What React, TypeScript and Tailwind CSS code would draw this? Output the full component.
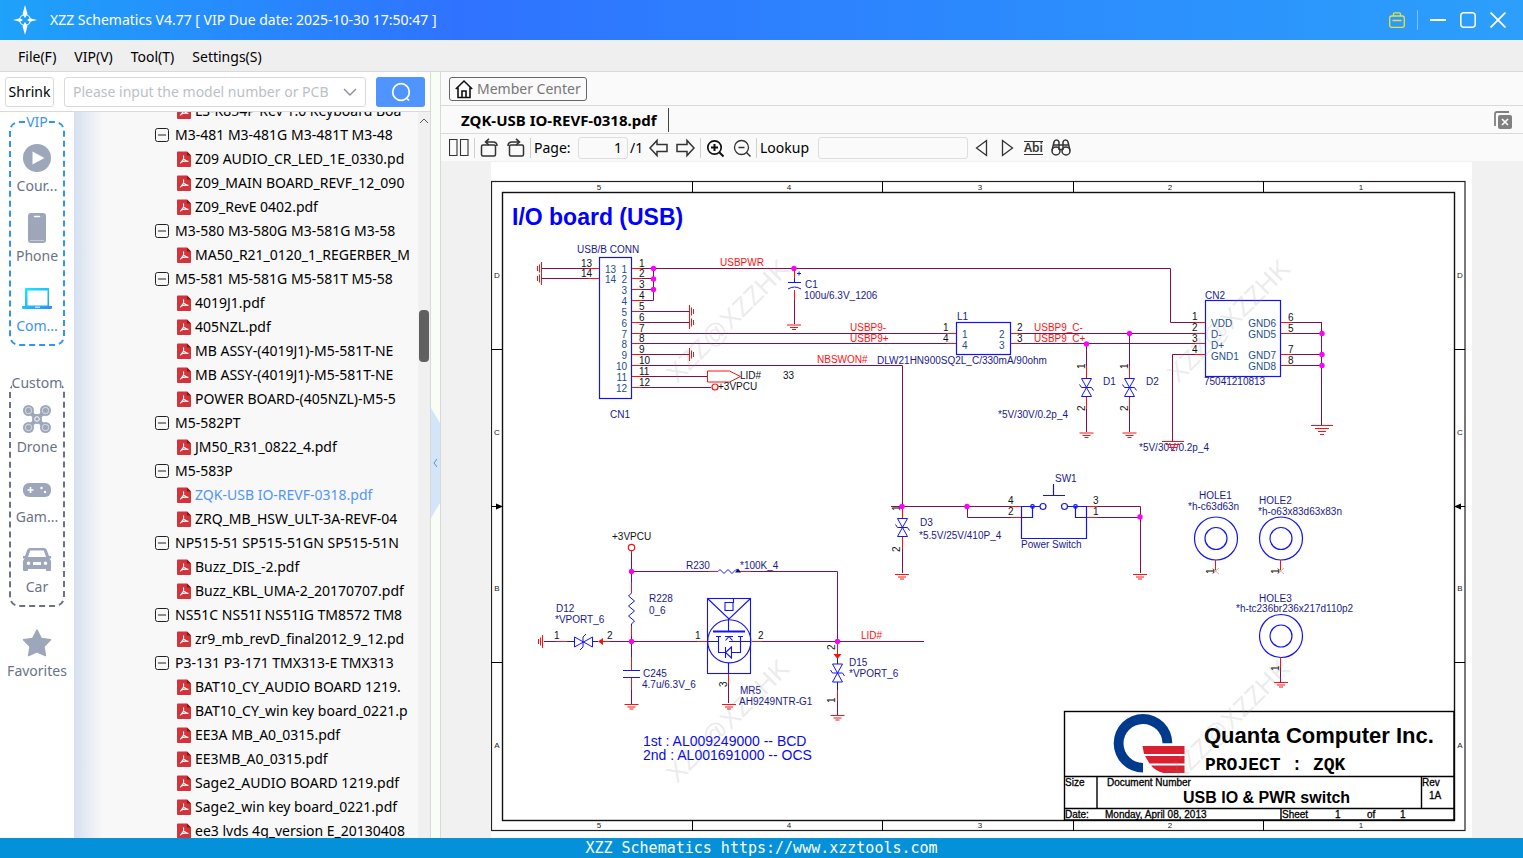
import React from "react";

type Row = { kind: "group" | "file"; name: string; active?: boolean };

const g = (name: string): Row => ({ kind: "group", name });
const f = (name: string, active = false): Row => ({ kind: "file", name, active });

const rows: Row[] = [
  f("LS-K854P Rev 1.0 Keyboard Boa"),
  g("M3-481 M3-481G M3-481T M3-48"),
  f("Z09 AUDIO_CR_LED_1E_0330.pd"),
  f("Z09_MAIN BOARD_REVF_12_090"),
  f("Z09_RevE 0402.pdf"),
  g("M3-580 M3-580G M3-581G M3-58"),
  f("MA50_R21_0120_1_REGERBER_M"),
  g("M5-581 M5-581G M5-581T M5-58"),
  f("4019J1.pdf"),
  f("405NZL.pdf"),
  f("MB ASSY-(4019J1)-M5-581T-NE"),
  f("MB ASSY-(4019J1)-M5-581T-NE"),
  f("POWER BOARD-(405NZL)-M5-5"),
  g("M5-582PT"),
  f("JM50_R31_0822_4.pdf"),
  g("M5-583P"),
  f("ZQK-USB IO-REVF-0318.pdf", true),
  f("ZRQ_MB_HSW_ULT-3A-REVF-04"),
  g("NP515-51 SP515-51GN SP515-51N"),
  f("Buzz_DIS_-2.pdf"),
  f("Buzz_KBL_UMA-2_20170707.pdf"),
  g("NS51C NS51I NS51IG TM8572 TM8"),
  f("zr9_mb_revD_final2012_9_12.pd"),
  g("P3-131 P3-171 TMX313-E TMX313"),
  f("BAT10_CY_AUDIO BOARD 1219."),
  f("BAT10_CY_win key board_0221.p"),
  f("EE3A MB_A0_0315.pdf"),
  f("EE3MB_A0_0315.pdf"),
  f("Sage2_AUDIO BOARD 1219.pdf"),
  f("Sage2_win key board_0221.pdf"),
  f("ee3 lvds 4g_version E_20130408"),
];

/* ---------- icons ---------- */

const PdfIcon = () => (
  <svg className="h-4 w-3.5 shrink-0" viewBox="0 0 14 16">
    <path d="M1 0.5h9l4 4V15a1 1 0 0 1-1 1H1a1 1 0 0 1-1-1V1.500a1 1 0 0 1 1-1z" fill="#d2343c" />
    <path d="M10 0.500l4 4h-4z" fill="#8e1219" />
    <path d="M6.600 4.800v3.400L3.500 12M6.600 8.200l4.400 2.300M4.500 11c1.500-.9 3.600-1.200 6.500-.6" fill="none" stroke="#fff" strokeWidth="1.100" strokeLinecap="round" />
  </svg>
);

const CollapseIcon = () => (
  <svg className="h-3.5 w-3.5 shrink-0" viewBox="0 0 14 14" fill="none" stroke="#222">
    <rect x="0.5" y="0.5" width="13" height="13" rx="2" />
    <path d="M3 7h8" />
  </svg>
);

const PlayIcon = () => (
  <svg className="h-8 w-8" viewBox="0 0 32 32">
    <circle cx="16" cy="16" r="14" fill="#9ea6ba" />
    <path d="M11.500 9.500v13L23.500 16z" fill="#fff" />
  </svg>
);

const PhoneIcon = () => (
  <svg className="h-8 w-8" viewBox="0 0 32 32">
    <rect x="7" y="1" width="18" height="30" rx="3" fill="#9ea6ba" />
    <path d="M13.500 4.500h5" stroke="#fff" strokeWidth="1.500" strokeLinecap="round" />
    <path d="M9 28.500h14" stroke="#c5cad6" />
  </svg>
);

const LaptopIcon = () => (
  <svg className="h-8 w-8" viewBox="0 0 32 32">
    <defs>
      <linearGradient id="lap" x1="0" x2="1" y1="0" y2="1">
        <stop offset="0" stopColor="#12f0ff" />
        <stop offset="1" stopColor="#2b8bff" />
      </linearGradient>
    </defs>
    <path fillRule="evenodd" fill="url(#lap)" d="M5 6h23v18H31v1.500a1.500 1.500 0 0 1-1.500 1.500h-27A1.500 1.500 0 0 1 1 25.500V24h3V7a1 1 0 0 1 1-1zM6.500 8.500V23.500h20V8.500z" />
    <path d="M14 25.200h5" stroke="#fff" />
  </svg>
);

const DroneIcon = () => (
  <svg className="h-8 w-8" viewBox="0 0 32 32">
    <path d="M7 7l18 18M25 7L7 25" stroke="#9ea6ba" strokeWidth="4" />
    {[[7.5, 7.5], [24.5, 7.5], [7.5, 24.5], [24.5, 24.5]].map(([x, y]) => (
      <g key={`${x}-${y}`}>
        <circle cx={x} cy={y} r="5.500" fill="#9ea6ba" />
        <circle cx={x} cy={y} r="3.200" fill="none" stroke="#dfe2ea" strokeWidth="0.900" />
      </g>
    ))}
    <circle cx="16" cy="16" r="5" fill="#9ea6ba" />
    <circle cx="16" cy="16" r="2.300" fill="none" stroke="#fff" strokeWidth="1" />
  </svg>
);

const GameIcon = () => (
  <svg className="h-8 w-8" viewBox="0 0 32 32">
    <rect x="2" y="10" width="28" height="14" rx="6" fill="#9ea6ba" />
    <path d="M6.500 17h6M9.500 14v6" stroke="#fff" strokeWidth="1.600" />
    <circle cx="20.500" cy="15" r="1.200" fill="#fff" />
    <circle cx="24" cy="19" r="1.200" fill="#fff" />
  </svg>
);

const CarIcon = () => (
  <svg className="h-8 w-8" viewBox="0 0 32 32">
    <path fillRule="evenodd" fill="#9ea6ba" d="M9 5h14a3 3 0 0 1 2.700 1.800L28 13h2v2.500h-1.500L30 18v9a1 1 0 0 1-1 1h-3a1 1 0 0 1-1-1v-1H7v1a1 1 0 0 1-1 1H3a1 1 0 0 1-1-1v-9l1.500-2.500H2V13h2l2.300-6.200A3 3 0 0 1 9 5zm.2 2.500L7 14h18l-2.200-6.500zM7.500 18.500a1.800 1.800 0 1 0 0 3.600 1.800 1.800 0 0 0 0-3.600zm17 0a1.800 1.800 0 1 0 0 3.600 1.800 1.800 0 0 0 0-3.600zM12 19v3h8v-3z" />
  </svg>
);

const StarIcon = () => (
  <svg className="h-8 w-8" viewBox="0 0 32 32">
    <path d="M16 3l4.200 8.400 9.300 1.400-6.600 6.600 1.500 9.200L16 24.800l-8.400 3.800 1.500-9.200-6.600-6.600 9.300-1.400z" fill="#9ea6ba" stroke="#9ea6ba" strokeWidth="1.500" strokeLinejoin="round" />
  </svg>
);

const LogoIcon = () => (
  <svg className="h-8 w-8" viewBox="0 0 32 32" fill="#fff">
    <circle cx="16" cy="16" r="5.500" fill="none" stroke="#fff" strokeDasharray="6 2.640" strokeDashoffset="-1.300" />
    <path d="M16 1l2.500 9-2.500 4-2.500-4zM16 31l2.500-9-2.500-4-2.500 4z" />
    <path d="M4 16l7-1.800 3 1.800-3 1.800zM28 16l-7-1.800-3 1.800 3 1.800z" />
  </svg>
);

/* ---------- sidebar ---------- */

const NavItem = ({ icon, label, active }: { icon: React.ReactNode; label: string; active?: boolean }) => (
  <button className={active ? "flex h-[70px] w-full flex-col items-center text-[#3b93f5]" : "flex h-[70px] w-full flex-col items-center text-[#6b7285]"}>
    {icon}
    <span className="leading-6">{label}</span>
  </button>
);

const Sidebar = () => (
  <nav className="flex w-[74px] shrink-0 flex-col items-center bg-white pt-[9px] text-sm">
    <section className="relative h-[225px] w-14 rounded-[10px] border-2 border-dashed border-[#2f95f3] pt-[19px]">
      <h2 className="absolute inset-x-0 -top-[13px] text-center leading-6 text-[#3b93f5]">
        <span className="bg-white">VIP</span>
      </h2>
      <NavItem icon={<PlayIcon />} label="Cour..." />
      <NavItem icon={<PhoneIcon />} label="Phone" />
      <NavItem icon={<LaptopIcon />} label="Com..." active />
    </section>
    <section className="relative mt-9 h-[225px] w-14 rounded-[10px] border-2 border-dashed border-[#6b7285] pt-[19px]">
      <h2 className="absolute inset-x-0 -top-[13px] flex justify-center leading-6 text-[#6b7285]">
        <span className="bg-white">Custom</span>
      </h2>
      <NavItem icon={<DroneIcon />} label="Drone" />
      <NavItem icon={<GameIcon />} label="Gam..." />
      <NavItem icon={<CarIcon />} label="Car" />
    </section>
    <div className="mt-5 w-full">
      <NavItem icon={<StarIcon />} label="Favorites" />
    </div>
  </nav>
);

/* ---------- schematic primitives ---------- */

const WIRE = "#80104c";
const RED = "#ff1010";
const BLUE = "#1414f0";
const NAVY = "#1a1a8c";
const PIN = "#1c4f8b";

const W = ({ d }: { d: string }) => <path d={d} fill="none" stroke={WIRE} />;
const R = ({ d }: { d: string }) => <path d={d} fill="none" stroke={RED} />;
const B = ({ d }: { d: string }) => <path d={d} fill="none" stroke={BLUE} />;
const Dot = ({ x, y }: { x: number; y: number }) => <circle cx={x} cy={y} r="2.700" fill="#ff00ff" />;

type TProps = { x: number; y: number; c?: string; s?: number; a?: "start" | "middle" | "end"; b?: boolean; children: React.ReactNode };
const T = ({ x, y, c = NAVY, s = 10, a = "start", b, children }: TProps) => (
  <text x={x} y={y} fill={c} fontSize={s} textAnchor={a} fontWeight={b ? 700 : 400}>{children}</text>
);
const V = ({ x, y, children }: { x: number; y: number; children: React.ReactNode }) => (
  <text transform={`translate(${x} ${y}) rotate(-90)`} fill="#111" fontSize={10}>{children}</text>
);

const Gnd = ({ x, y }: { x: number; y: number }) => (
  <R d={`M${x - 7} ${y}h14M${x - 4} ${y + 2.500}h8M${x - 2} ${y + 4.500}h4`} />
);
const WideGnd = ({ x, y }: { x: number; y: number }) => (
  <R d={`M${x - 11} ${y}h22M${x - 7} ${y + 3}h14M${x - 4} ${y + 6}h8M${x - 2} ${y + 9}h4`} />
);
const SideGnd = ({ x, y, dir }: { x: number; y: number; dir: 1 | -1 }) => (
  <R d={`M${x} ${y - 6.500}v13M${x + 2 * dir} ${y - 4}v8M${x + 4 * dir} ${y - 2.500}v5`} />
);
const Tvs = ({ x, y }: { x: number; y: number }) => (
  <B d={`M${x - 5} ${y - 9}h10l-10 18h10zM${x - 7} ${y - 3}l2 3h10l2 3`} />
);
const Hole = ({ x, y }: { x: number; y: number }) => (
  <g fill="none" stroke={BLUE} strokeWidth="1.200">
    <circle cx={x} cy={y} r="21.500" />
    <circle cx={x} cy={y} r="11" />
  </g>
);
const Watermark = ({ x, y }: { x: number; y: number }) => (
  <text transform={`translate(${x} ${y}) rotate(-45)`} fontSize={26} fill="#888" fillOpacity="0.180">XZZ@XZZHK</text>
);

const pinY = [268.5, 278.5, 289.5, 300.5, 311.5, 322.5, 333.5, 343.5, 354.5, 365.5, 376.5, 387.5];
const colLabels: [string, number][] = [["5", 599], ["4", 789], ["3", 980], ["2", 1170], ["1", 1361]];
const rowLabels: [string, number][] = [["D", 275], ["C", 432], ["B", 588], ["A", 745]];

const Frame = () => (
  <g>
    <g fill="none" stroke="#222">
      <rect x="491.500" y="181.500" width="973.500" height="649" strokeWidth="1.200" />
      <rect x="502.500" y="192.500" width="952" height="628" stroke="#111" strokeWidth="1.400" />
      <path d="M692.500 181v11M882.500 181v11M1073.500 181v11M1263.500 181v11M692.500 820v11M882.500 820v11M1073.500 820v11M1263.500 820v11M491 349.500h11M491 662.500h11M1454 349.500h11M1454 662.500h11M491 506.500h6M1460 506.500h5" stroke="#000" />
    </g>
    <path d="M496 503.500l7 3-7 3zM1461 503.500l-7 3 7 3z" />
    {colLabels.map(([t, x]) => (
      <g key={t}>
        <T x={x} y={190} c="#222" s={8} a="middle">{t}</T>
        <T x={x} y={828} c="#222" s={8} a="middle">{t}</T>
      </g>
    ))}
    {rowLabels.map(([t, y]) => (
      <g key={t}>
        <T x={497} y={y + 3} c="#222" s={8} a="middle">{t}</T>
        <T x={1460} y={y + 3} c="#222" s={8} a="middle">{t}</T>
      </g>
    ))}
  </g>
);

const Connector1 = () => (
  <g>
    <T x={577} y={253}>USB/B CONN</T>
    <rect x="599.500" y="257.500" width="32" height="141" fill="none" stroke={BLUE} strokeWidth="1.200" />
    {pinY.map((y, i) => (
      <g key={y}>
        <R d={`M632 ${y}h10`} />
        <T x={639} y={y - 2} c="#111">{i + 1}</T>
        <T x={627} y={y + 4} c={PIN} a="end">{i + 1}</T>
      </g>
    ))}
    {[268.5, 278.5].map((y, i) => (
      <g key={y}>
        <W d={`M542 ${y}h46`} />
        <R d={`M588 ${y}h11`} />
        <SideGnd x={541.5} y={y} dir={-1} />
        <T x={581} y={y - 2} c="#111">{13 + i}</T>
        <T x={605} y={y + 4} c={PIN}>{13 + i}</T>
      </g>
    ))}
    <W d="M642 268.500H1170.500V322.500H1195M642 278.500h11M642 289.500h11M642 300.500h11.500V268" />
    <Dot x={653.5} y={268.5} />
    <Dot x={653.5} y={279} />
    <Dot x={653.5} y={289.5} />
    {[311.5, 322.5, 354.5].map((y) => (
      <g key={y}>
        <W d={`M642 ${y}h47`} />
        <SideGnd x={689.5} y={y} dir={1} />
      </g>
    ))}
    <W d="M642 333.500H946M642 343.500H946M642 365.500H902.500V506M642 376.500h65M642 387.500h69" />
    <R d="M707.500 371h22l11 5.500-11 5.500h-22z" />
    <circle cx="715" cy="387" r="3" fill="none" stroke={RED} strokeWidth="1.200" />
    <T x={740} y={379} c="#111">LID#</T>
    <T x={783} y={379} c="#111">33</T>
    <T x={718} y={390} c="#111">+3VPCU</T>
    <T x={610} y={418}>CN1</T>
    <T x={720} y={266} c={RED}>USBPWR</T>
    <T x={850} y={331} c={RED}>USBP9-</T>
    <T x={850} y={342} c={RED}>USBP9+</T>
    <T x={817} y={363} c={RED}>NBSWON#</T>
  </g>
);

const Capacitor1 = () => (
  <g>
    <Dot x={794} y={268.5} />
    <R d="M794.500 269v13M794.500 290v10" />
    <B d="M794.500 278v4.500M788 282.500h13M788 289q6.500-4 13 0M797 273.500h4M799 271.500v4" />
    <W d="M794.500 300v24" />
    <Gnd x={794} y={325} />
    <T x={805} y={288}>C1</T>
    <T x={804} y={299}>100u/6.3V_1206</T>
  </g>
);

const UsbSection = () => (
  <g>
    <rect x="956.500" y="322.500" width="54" height="32" fill="none" stroke={BLUE} strokeWidth="1.200" />
    <T x={957} y={320}>L1</T>
    <T x={962} y={364} a="middle">DLW21HN900SQ2L_C/330mA/90ohm</T>
    <R d="M946 333.500h10M946 343.500h10M1011 333.500h10M1011 343.500h10M1195 322.500h10M1195 333.500h10M1195 343.500h10M1195 354.500h10" />
    <W d="M1021 333.500H1195M1021 343.500H1195M1195 354.500H1172.500V441" />
    <T x={943} y={331} c="#111">1</T>
    <T x={943} y={342} c="#111">4</T>
    <T x={962} y={338} c={PIN}>1</T>
    <T x={962} y={349} c={PIN}>4</T>
    <T x={999} y={338} c={PIN}>2</T>
    <T x={999} y={349} c={PIN}>3</T>
    <T x={1017} y={331} c="#111">2</T>
    <T x={1017} y={342} c="#111">3</T>
    <T x={1034} y={331} c={RED}>USBP9_C-</T>
    <T x={1034} y={342} c={RED}>USBP9_C+</T>
    {[1086.5, 1129.5].map((x, i) => (
      <g key={x}>
        <W d={`M${x} ${i ? 333 : 343}V366M${x} 409V432`} />
        <R d={`M${x} 366v12M${x} 397v12`} />
        <Tvs x={x} y={387.5} />
        <Gnd x={x} y={433} />
        <Dot x={x} y={i ? 333.5 : 344} />
        <V x={x - 2} y={369}>1</V>
        <V x={x - 2} y={411}>2</V>
      </g>
    ))}
    <T x={1103} y={385}>D1</T>
    <T x={1146} y={385}>D2</T>
    <T x={998} y={418}>*5V/30V/0.2p_4</T>
    <T x={1139} y={451}>*5V/30V/0.2p_4</T>
    <WideGnd x={1173} y={441.5} />
    <rect x="1205.500" y="300.500" width="75" height="76" fill="none" stroke={BLUE} strokeWidth="1.200" />
    <T x={1205} y={299}>CN2</T>
    <T x={1204} y={385}>75041210813</T>
    {["VDD", "D-", "D+", "GND1"].map((t, i) => (
      <g key={t}>
        <T x={1211} y={327 + i * 11} c={PIN}>{t}</T>
        <T x={1192} y={320 + i * 11} c="#111">{i + 1}</T>
      </g>
    ))}
    {([["GND6", 6, 322.5], ["GND5", 5, 333.5], ["GND7", 7, 354.5], ["GND8", 8, 365.5]] as [string, number, number][]).map(([t, n, y]) => (
      <g key={t}>
        <T x={1276} y={y + 4} c={PIN} a="end">{t}</T>
        <T x={1288} y={y - 2} c="#111">{n}</T>
        <R d={`M1281 ${y}h11`} />
        <W d={`M1292 ${y}h30`} />
      </g>
    ))}
    <W d="M1321.500 322V425" />
    <Dot x={1322} y={333.5} />
    <Dot x={1322} y={354.5} />
    <Dot x={1322} y={365.5} />
    <WideGnd x={1322} y={425.5} />
  </g>
);

const SwitchSection = () => (
  <g>
    <W d="M891 506.500H1011M967.500 506V517.500H1011M902.500 549V573M1097 506.500H1140.500V573M1097 517.500H1140" />
    <R d="M902.500 507v12M902.500 537v12M1011 506.500h10M1011 517.500h10M1087 506.500h10M1087 517.500h10" />
    <Tvs x={902.5} y={527.5} />
    <Gnd x={902} y={574.5} />
    <Gnd x={1140} y={574.5} />
    <V x={900} y={511}>1</V>
    <V x={900} y={552}>2</V>
    <T x={920} y={526}>D3</T>
    <T x={919} y={539}>*5.5V/25V/410P_4</T>
    <g fill="none" stroke={BLUE} strokeWidth="1.200">
      <path d="M1032 506.500h-10.500V538.500h65V506.500h-10.500M1032.500 506V517.500h-11M1075.500 506V517.500h11M1032 506.500h8M1068 506.500h8M1053.500 484V495.500M1043 495.500h22" />
      <circle cx="1032.500" cy="506.500" r="1.800" />
      <circle cx="1043" cy="506.500" r="3" />
      <circle cx="1064.500" cy="506.500" r="3" />
      <circle cx="1075.500" cy="506.500" r="1.800" />
    </g>
    <T x={1055} y={482}>SW1</T>
    <T x={1021} y={548}>Power Switch</T>
    <T x={1008} y={504} c="#111">4</T>
    <T x={1008} y={515} c="#111">2</T>
    <T x={1093} y={504} c="#111">3</T>
    <T x={1093} y={515} c="#111">1</T>
    <Dot x={902} y={506.500} />
    <Dot x={967} y={506.500} />
    <Dot x={1140} y={517} />
    <T x={1199} y={499}>HOLE1</T>
    <T x={1188} y={510}>*h-c63d63n</T>
    <T x={1259} y={504}>HOLE2</T>
    <T x={1258} y={515}>*h-o63x83d63x83n</T>
    <T x={1259} y={602}>HOLE3</T>
    <T x={1236} y={612}>*h-tc236br236x217d110p2</T>
    <Hole x={1216} y={538.5} />
    <Hole x={1281} y={538.5} />
    <Hole x={1281} y={636} />
    <R d="M1215.500 560v10M1280.500 560v10M1280.500 657v11" />
    <path d="M1212 568l7 6M1219 568l-7 6M1277 568l7 6M1284 568l-7 6" stroke="#c8906a" strokeWidth="0.700" />
    <W d="M1280.500 668v14" />
    <Gnd x={1281} y={682.5} />
    <V x={1214} y={574}>1</V>
    <V x={1279} y={574}>1</V>
    <V x={1279} y={671}>1</V>
  </g>
);

const SensorSection = () => (
  <g>
    <T x={612} y={540} c="#111">+3VPCU</T>
    <circle cx="631.500" cy="547.500" r="3.200" fill="none" stroke={RED} strokeWidth="1.200" />
    <W d="M631.500 553V582M631.500 571.500H708M751 571.500H837.500V641M631.500 636V657M544 641.500h12M610 641.500h87M762 641.500H924M631.500 690v14M728.500 684v19M837.500 701v14" />
    <R d="M631.500 551v2M631.500 582v11M631.500 625v11M708 571.500h10M740 571.500h11M556 641.500h11M603 641.500h7M697 641.500h11M752 641.500h10M631.500 657v13M631.500 678v12M728.500 673v11M837.500 642v12M837.500 690v11" />
    <B d="M718 571.500l2-2 4 4 4-4 4 4 4-4 4 2M631.500 593l-3 3 6 5-6 5 6 5-6 5 6 5-3 3v2M567 641.500h7M592 641.500h6M623 670.500h17M623 677.500h17M837.500 658v6M837.500 682v8M574.500 637v10l18-10v10zM586 634l-3 3v10l-3 3" />
    <path d="M735 572.500l3-4 3 4z" fill="#101070" />
    <path d="M598 641.500l5-3.500v7zM833.500 654h8l-4 5z" fill={RED} />
    <SideGnd x={542.5} y={641.5} dir={-1} />
    <Gnd x={631.5} y={704.5} />
    <Gnd x={729} y={704.5} />
    <Gnd x={837.5} y={715.5} />
    <Tvs x={837.5} y={673} />
    <g fill="none" stroke={BLUE} strokeWidth="1.100">
      <rect x="707.500" y="598.500" width="43" height="75" />
      <circle cx="729.300" cy="641.300" r="21.600" />
      <path d="M707.500 598.500l21.500 20.500 21.500-20.500M725 602.500h8v8h-8zM733.500 598v5M728.500 619v12M728.500 663v10M708 641.500h10.500M718.500 636v16.500h7M732 652.500h8.500V636M729 641.500h22M716 636.500h5M725 636.500h8M738 636.500h5M725.500 640.500l3.500-4 3.500 4M725.500 647v11M731.500 647l-6 5.500 6 5.500z" />
      <path d="M713 631.500h32" strokeWidth="2" />
    </g>
    <Dot x={631.500} y={571.500} />
    <Dot x={631.500} y={641.500} />
    <Dot x={837.500} y={641.500} />
    <T x={686} y={569}>R230</T>
    <T x={740} y={569}>*100K_4</T>
    <T x={649} y={602}>R228</T>
    <T x={649} y={614}>0_6</T>
    <T x={556} y={612}>D12</T>
    <T x={555} y={623}>*VPORT_6</T>
    <T x={554} y={639} c="#111">1</T>
    <T x={607} y={639} c="#111">2</T>
    <T x={695} y={639} c="#111">1</T>
    <T x={758} y={639} c="#111">2</T>
    <T x={643} y={677}>C245</T>
    <T x={642} y={688}>4.7u/6.3V_6</T>
    <T x={740} y={694}>MR5</T>
    <T x={739} y={705}>AH9249NTR-G1</T>
    <T x={861} y={639} c={RED}>LID#</T>
    <T x={849} y={666}>D15</T>
    <T x={849} y={677}>*VPORT_6</T>
    <V x={727} y={687}>3</V>
    <V x={835} y={650}>2</V>
    <V x={835} y={703}>1</V>
    <T x={643} y={746} s={14} c="#0a0af0">1st : AL009249000 -- BCD</T>
    <T x={643} y={760} s={14} c="#0a0af0">2nd : AL001691000 -- OCS</T>
  </g>
);

const TitleBlock = () => (
  <g>
    <g fill="none" stroke="#000" strokeWidth="1.400">
      <rect x="1064.500" y="711.500" width="389.500" height="108.500" />
      <path d="M1064 776.500h390M1064 808.500h390M1097 776v32M1421.500 776v32M1281 808v12" />
    </g>
    <path d="M1143 772.600A29.300 29.300 0 1 1 1172.300 743.300H1162.500A19.500 19.500 0 1 0 1143 763z" fill="#003a8c" />
    <path d="M1142.500 746h42v8h-40.500zM1145 756h39.500v7.500h-35zM1151 765.500h33.500v7.500h-21q-8-2-12.500-7.500z" fill="#da1f30" />
    <T x={1204} y={743} s={22} c="#000" b>Quanta Computer Inc.</T>
    <text x="1205" y="770" fontSize={18} fontWeight={700} fontFamily="'Liberation Mono', monospace">PROJECT : ZQK</text>
    <T x={1183} y={803} s={16} c="#000" b>USB IO &amp; PWR switch</T>
    <g stroke="#000" strokeWidth="0.300">
      <T x={1065} y={786} c="#000">Size</T>
      <T x={1107} y={786} c="#000">Document Number</T>
      <T x={1422} y={786} c="#000">Rev</T>
      <T x={1429} y={799} c="#000">1A</T>
      <T x={1065} y={818} c="#000">Date:</T>
      <T x={1105} y={818} c="#000">Monday, April 08, 2013</T>
      <T x={1282} y={818} c="#000">Sheet</T>
      <T x={1335} y={818} c="#000">1</T>
      <T x={1367} y={818} c="#000">of</T>
      <T x={1400} y={818} c="#000">1</T>
    </g>
  </g>
);

const Schematic = () => (
  <svg className="h-full w-full bg-white" viewBox="491 162 981 676" preserveAspectRatio="xMinYMin meet" fontFamily="'Liberation Sans', Arial, sans-serif" role="img" aria-label="I/O board (USB)">
    <Frame />
    <T x={512} y={225} s={23} c="#0000ff" b>I/O board (USB)</T>
    <Connector1 />
    <Capacitor1 />
    <UsbSection />
    <SwitchSection />
    <SensorSection />
    <TitleBlock />
    <Watermark x={677} y={384} />
    <Watermark x={1178} y={384} />
    <Watermark x={677} y={784} />
    <Watermark x={1178} y={784} />
  </svg>
);

/* ---------- toolbar ---------- */

const Tool = ({ label, children }: { label: string; children: React.ReactNode }) => (
  <button aria-label={label} className="flex h-5 w-5 shrink-0 items-center justify-center">
    <svg className="h-5 w-5" viewBox="0 0 20 20" fill="none" stroke="#333" strokeWidth="1.500">{children}</svg>
  </button>
);
const Sep = () => <span className="h-5 w-px shrink-0 bg-[#cfcfcf]" />;

const Toolbar = () => (
  <div className="flex h-[27px] shrink-0 items-center bg-[#fafafa] pl-2 text-sm">
    <Tool label="Two pages"><path d="M.500 1.500h7.500v16H.500zM11.500 1.500H19v16h-7.500z" strokeWidth="1.100" /></Tool>
    <span className="w-[5px]" /><Sep /><span className="w-1" />
    <Tool label="Rotate left"><rect x="2.500" y="7" width="14" height="11" rx="1.500" /><path d="M7 4h7q4 0 4 4M10 .800L6.500 4 10 7" strokeWidth="1.600" /></Tool>
    <span className="w-[7px]" />
    <Tool label="Rotate right"><rect x="3.500" y="7" width="14" height="11" rx="1.500" /><path d="M13 4H6Q2 4 2 8M10 .800L13.500 4 10 7" strokeWidth="1.600" /></Tool>
    <span className="w-1" /><Sep />
    <label htmlFor="page" className="ml-[3px] w-11 shrink-0">Page:</label>
    <input id="page" defaultValue="1" className="h-[22px] w-[50px] shrink-0 rounded-[3px] border border-[#dedede] bg-[#fafafa] pr-[5px] text-right" />
    <span className="ml-0.5 w-[19px] shrink-0">/1</span>
    <Tool label="Previous page"><path d="M1 10l7-7.500v4h10v7H8v4z" /></Tool>
    <span className="w-1.5" />
    <Tool label="Next page"><path d="M19 10l-7-7.500v4H2v7h10v4z" /></Tool>
    <span className="w-[5px]" /><Sep /><span className="w-[5px]" />
    <Tool label="Zoom in"><circle cx="8.500" cy="9.500" r="6.700" stroke="#111" strokeWidth="1.700" /><path d="M13.500 14.500l4 4M8.500 6v7M5 9.500h7" stroke="#111" strokeWidth="2" /></Tool>
    <span className="w-[7px]" />
    <Tool label="Zoom out"><circle cx="8.500" cy="9.500" r="7" strokeWidth="1.300" /><path d="M13.500 14.500l4 4M5.500 9.500h6" /></Tool>
    <span className="w-[3px]" /><Sep />
    <label htmlFor="lookup" className="ml-[3px] w-[58px] shrink-0">Lookup</label>
    <input id="lookup" className="h-[22px] w-[150px] shrink-0 rounded-[3px] border border-[#dedede] bg-[#fafafa] px-1" />
    <span className="w-1" />
    <Tool label="Find previous"><path d="M14.500 2.500v15l-10-7.500z" strokeWidth="1.300" /></Tool>
    <span className="w-1.5" />
    <Tool label="Find next"><path d="M4.500 2.500v15l10-7.500z" strokeWidth="1.300" /></Tool>
    <button className="ml-1.5 shrink-0 border-y border-[#333] text-center text-xs leading-3 font-semibold text-[#333]">Abi</button>
    <span className="w-2" />
    <Tool label="Search document">
      <circle cx="5" cy="13" r="4" /><circle cx="15" cy="13" r="4" />
      <path d="M1 12.500L3 4q.500-2 2.500-2T8 4v8M19 12.500L17 4q-.500-2-2.500-2T12 4v8M8 7h4M8 11.500h4M2.500 7h5M12.500 7h5" />
    </Tool>
  </div>
);

/* ---------- page ---------- */

export default function App() {
  return (
    <div className="flex h-screen flex-col overflow-hidden bg-[#f0f0f0] font-['Noto_Sans','Open_Sans',sans-serif] text-sm text-black">
      <header className="flex h-10 shrink-0 items-center bg-linear-to-r from-[#1ea2fa] via-[#2f72ff] via-30% to-[#2c9ffb] pr-[17px] pl-[9px] text-white">
        <LogoIcon />
        <h1 className="ml-[9px]">XZZ Schematics V4.77 [ VIP Due date: 2025-10-30 17:50:47 ]</h1>
        <div className="ml-auto flex items-center">
          <button aria-label="Member">
            <svg className="h-4 w-4" viewBox="0 0 16 16" fill="none" stroke="#e6e23c" strokeWidth="1.300">
              <rect x="0.700" y="4" width="14.600" height="11.300" rx="2" />
              <path d="M4.500 4V2q0-1.200 1.200-1.200h4.600q1.200 0 1.200 1.200v2M3.500 8.500h9" />
            </svg>
          </button>
          <span className="mx-3 h-5 w-px bg-white/40" />
          <button aria-label="Minimize"><svg className="h-4 w-4" viewBox="0 0 16 16" stroke="#fff" strokeWidth="2"><path d="M0 8h16" /></svg></button>
          <button aria-label="Maximize" className="ml-3.5"><svg className="h-4 w-4" viewBox="0 0 16 16" fill="none" stroke="#fff" strokeWidth="1.500"><rect x="0.800" y="0.800" width="14.400" height="14.400" rx="3" /></svg></button>
          <button aria-label="Close" className="ml-3.5"><svg className="h-4 w-4" viewBox="0 0 16 16" stroke="#fff" strokeWidth="1.800"><path d="M.500.500l15 15M15.500.500l-15 15" /></svg></button>
        </div>
      </header>

      <nav className="flex h-8 shrink-0 items-center gap-[18px] border-b border-[#d9d9d9] bg-[#efefef] pt-0.5 pl-[18px]">
        <button>File(F)</button>
        <button>VIP(V)</button>
        <button>Tool(T)</button>
        <button>Settings(S)</button>
      </nav>

      <main className="flex min-h-0 flex-1">
        <div className="flex w-[431px] shrink-0 flex-col border-r border-[#d9d9d9]">
          <form className="flex h-10 shrink-0 items-center border-b border-[#d9d9d9] bg-white px-[5px]" onSubmit={(e) => e.preventDefault()}>
            <button type="button" className="h-[30px] w-[49px] rounded-[3px] border border-[#d9d9d9]">Shrink</button>
            <div className="ml-2.5 flex h-[30px] flex-1 items-center rounded-[3px] border border-[#d9d9d9] px-2">
              <input aria-label="Model number" placeholder="Please input the model number or PCB" className="min-w-0 flex-1 outline-none placeholder:text-[#bcbfc6]" />
              <svg className="h-3.5 w-3.5 shrink-0" viewBox="0 0 14 14" fill="none" stroke="#8a8f9a" strokeWidth="1.400"><path d="M1 4l6 6 6-6" /></svg>
            </div>
            <button aria-label="Search" className="ml-2.5 flex h-[30px] w-[49px] items-center justify-center rounded-[3px] bg-[#4f94ff]">
              <svg className="h-5 w-5" viewBox="0 0 20 20" fill="none" stroke="#fff" strokeWidth="1.700"><circle cx="10" cy="10" r="8.300" /><path d="M15.500 16l2.500 2.500" /></svg>
            </button>
          </form>

          <div className="flex min-h-0 flex-1">
            <Sidebar />
            <div className="flex min-w-0 flex-1 overflow-hidden bg-[#f8f8f8] bg-linear-to-r from-[#d6e0f0] to-[#f8f8f8] to-8% pl-[81px]">
              <ul className="-mt-[13px] min-w-0 flex-1">
                {rows.map((r, i) =>
                  r.kind === "group" ? (
                    <li key={i} className="flex h-6 items-center gap-1.5 whitespace-nowrap">
                      <CollapseIcon />
                      {r.name}
                    </li>
                  ) : (
                    <li key={i} className="flex h-6 items-center gap-1 pl-[22px] whitespace-nowrap">
                      <PdfIcon />
                      <a href="#" className={r.active ? "text-[#5296f8]" : ""}>{r.name}</a>
                    </li>
                  ),
                )}
              </ul>
              <div className="ml-3 w-3 shrink-0 bg-[#f0f0f0] px-px pt-1">
                <svg className="h-2.5 w-2.5" viewBox="0 0 10 10" fill="none" stroke="#555"><path d="M1 7l4-4 4 4" /></svg>
                <div className="mt-[184px] h-[52px] rounded-sm bg-[#606060]" />
              </div>
            </div>
          </div>
        </div>

        <div className="flex w-[10px] shrink-0 items-center border-r border-[#d9d9d9] bg-[#f8fdf6]">
          <button aria-label="Collapse panel" className="mt-4 block w-full">
            <svg className="h-[110px] w-full" viewBox="0 0 9 110" preserveAspectRatio="none">
              <path d="M0 0l9 15v80l-9 15z" fill="#d3e5f9" />
              <path d="M6 51l-3 4 3 4" fill="none" stroke="#5c8fd0" />
            </svg>
          </button>
        </div>

        <div className="flex min-w-0 flex-1 flex-col bg-[#f1f1f1]">
          <div className="flex h-[34px] shrink-0 items-center border-b border-[#d9d9d9] bg-[#fafafa] pl-2">
            <button className="flex h-6 items-center gap-1 rounded-[3px] border border-[#666] px-[5px] text-[#777]">
              <svg className="h-5 w-[18px]" viewBox="0 0 18 20" fill="none" stroke="#111" strokeWidth="1.600"><path d="M.800 10L9 2l8.200 8M3 8.500V18.500h12V8.500M7 18v-6h4v6" /></svg>
              Member Center
            </button>
          </div>
          <div className="flex h-7 shrink-0 items-center border-b border-[#d9d9d9] bg-[#fafafa] pr-[11px]">
            <button className="h-6 border-r border-[#444] pr-3 pl-5 text-[15px] leading-6 font-bold">ZQK-USB IO-REVF-0318.pdf</button>
            <button aria-label="Close all tabs" className="ml-auto">
              <svg className="h-[18px] w-[18px]" viewBox="0 0 18 18">
                <path d="M1 15V3q0-2 2-2h12" fill="none" stroke="#808080" strokeWidth="1.800" />
                <rect x="4" y="4" width="14" height="14" rx="2" fill="#808080" />
                <path d="M8 8l6 6M14 8l-6 6" stroke="#fff" strokeWidth="1.600" />
              </svg>
            </button>
          </div>
          <Toolbar />
          <div className="min-h-0 flex-1 pt-px pr-[51px] pl-[50px]">
            <Schematic />
          </div>
        </div>
      </main>

      <footer className="flex h-5 shrink-0 items-center justify-center bg-[#0491d9] font-['DejaVu_Sans_Mono',monospace] text-[15px] leading-5 text-white">
        XZZ Schematics https://www.xzztools.com
      </footer>
    </div>
  );
}
